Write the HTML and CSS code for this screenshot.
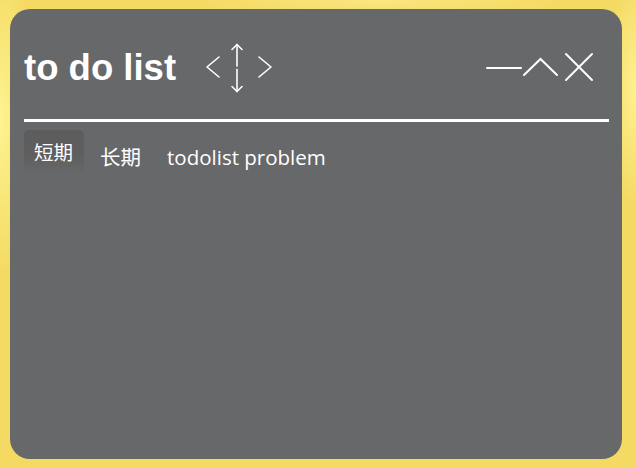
FILE: index.html
```html
<!DOCTYPE html>
<html lang="zh">
<head>
<meta charset="utf-8">
<title>to do list</title>
<link rel="stylesheet" href="styles.css">
</head>
<body>
<div class="card">
  <div class="header">
    <h1 class="title">to do list</h1>
    <svg class="nav-icon" width="70" height="52" viewBox="0 0 70 52" fill="none" stroke="#fff" stroke-width="1.6" stroke-linecap="round" stroke-linejoin="round">
      <polyline points="15,14 3,24 15,34"/>
      <line x1="33" y1="1.5" x2="33" y2="23"/>
      <line x1="33" y1="26.5" x2="33" y2="48.5"/>
      <polyline points="28,6.5 33,1.5 38,6.5"/>
      <polyline points="28,43.5 33,48.5 38,43.5"/>
      <polyline points="55,14 67,24 55,34"/>
    </svg>
    <div class="spacer"></div>
    <svg class="win-icon" width="110" height="32" viewBox="0 0 110 32" fill="none" stroke="#fff" stroke-width="2" stroke-linecap="round" stroke-linejoin="miter">
      <line x1="1" y1="17" x2="35" y2="17"/>
      <polyline points="38,24 54.5,8 71,24"/>
      <line x1="80" y1="3" x2="106" y2="29"/>
      <line x1="106" y1="3" x2="80" y2="29"/>
    </svg>
  </div>
  <div class="divider"></div>
  <div class="tabs">
    <div class="tab active">短期</div>
    <div class="tab">长期</div>
    <div class="tab">todolist problem</div>
  </div>
</div>
</body>
</html>
```
FILE: styles.css
```css
html, body {
  margin: 0;
  padding: 0;
}
body {
  width: 636px;
  height: 468px;
  overflow: hidden;
  background:
    radial-gradient(ellipse 40px 160px at 0px 120px, rgba(255, 247, 150, 0.9), rgba(255, 247, 150, 0)),
    radial-gradient(ellipse 30px 120px at 636px 90px, rgba(255, 245, 150, 0.9), rgba(255, 245, 150, 0)),
    radial-gradient(ellipse 200px 20px at 380px 0px, rgba(255, 240, 150, 0.6), rgba(255, 240, 150, 0)),
    #f4d962;
  font-family: "Open Sans", "Noto Sans CJK SC", sans-serif;
  color: #fff;
}
.card {
  box-sizing: border-box;
  margin: 9px 14px 0 10px;
  width: 612px;
  height: 450px;
  background: #676869;
  border-radius: 20px;
  padding: 0 13px 0 14px;
}
.header {
  display: flex;
  align-items: center;
  height: 110px;
  padding-top: 4px;
  box-sizing: border-box;
}
.title {
  margin: 0;
  font-family: "Liberation Sans", Arial, sans-serif;
  font-weight: bold;
  font-size: 36.5px;
  line-height: 40px;
  margin-top: 4px;
}
.nav-icon {
  margin-left: 28px;
  margin-top: 6px;
}
.spacer {
  flex: 1;
}
.win-icon {
  margin-right: 13px;
  margin-top: 2px;
}
.divider {
  height: 3px;
  background: #fff;
}
.tabs {
  display: flex;
  gap: 6px;
  margin-top: 8px;
}
.tab {
  padding: 13px 10px 0 10px;
  height: 44px;
  box-sizing: border-box;
  font-size: 20.5px;
  line-height: 28px;
  border-radius: 5px;
}
.tab.active {
  padding: 9px 11px 0 10px;
  font-size: 19.5px;
  background: linear-gradient(to bottom, #5d5d5e 0%, #5e5e5f 55%, rgba(94, 94, 95, 0) 100%);
}
```
